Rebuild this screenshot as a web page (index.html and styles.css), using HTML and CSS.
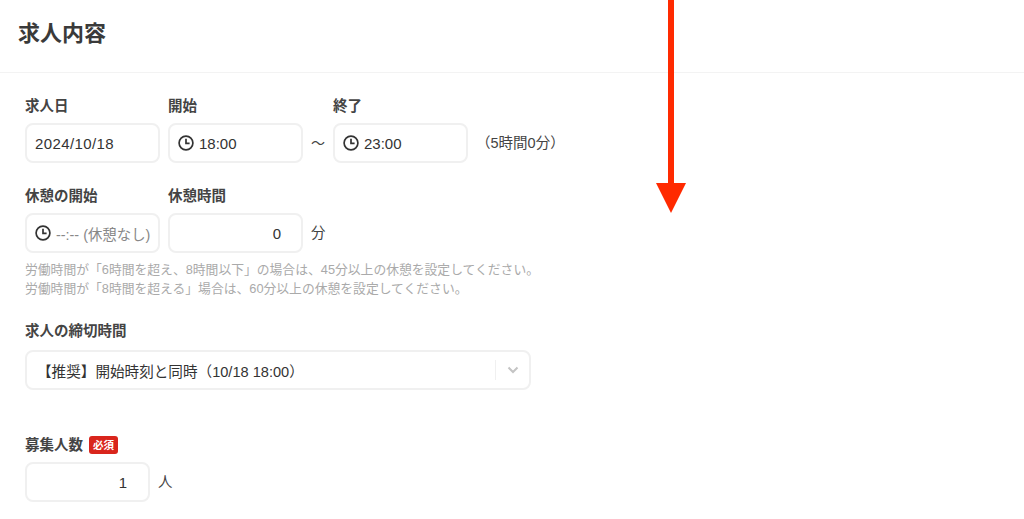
FILE: index.html
```html
<!DOCTYPE html>
<html lang="ja">
<head>
<meta charset="utf-8">
<title>求人内容</title>
<link rel="stylesheet" href="styles.css">
</head>
<body>
<header class="page-header"><h1 class="title">求人内容</h1></header>
<main class="form">
  <section class="row row-date">
    <div class="field w135">
      <label class="label">求人日</label>
      <div class="input date">2024/10/18</div>
    </div>
    <div class="field w135">
      <label class="label">開始</label>
      <div class="input">
        <svg class="clock" viewBox="0 0 16 16"><circle cx="8" cy="8" r="6.9"/><path d="M8 3.8V8.4H11.6"/></svg>
        <span>18:00</span>
      </div>
    </div>
    <span class="tilde">〜</span>
    <div class="field w135">
      <label class="label">終了</label>
      <div class="input">
        <svg class="clock" viewBox="0 0 16 16"><circle cx="8" cy="8" r="6.9"/><path d="M8 3.8V8.4H11.6"/></svg>
        <span>23:00</span>
      </div>
    </div>
    <span class="duration">（5時間0分）</span>
  </section>

  <section class="row row-break">
    <div class="field w135">
      <label class="label">休憩の開始</label>
      <div class="input">
        <svg class="clock" viewBox="0 0 16 16"><circle cx="8" cy="8" r="6.9"/><path d="M8 3.8V8.4H11.6"/></svg>
        <span class="muted">--:-- (休憩なし)</span>
      </div>
    </div>
    <div class="field w135">
      <label class="label">休憩時間</label>
      <div class="input number">0</div>
    </div>
    <span class="unit">分</span>
  </section>
  <p class="help">労働時間が「6時間を超え、8時間以下」の場合は、45分以上の休憩を設定してください。<br>労働時間が「8時間を超える」場合は、60分以上の休憩を設定してください。</p>

  <section class="block-deadline">
    <label class="label">求人の締切時間</label>
    <div class="select">
      <span class="select-value">【推奨】開始時刻と同時（10/18 18:00）</span>
      <span class="select-sep"></span>
      <svg class="chevron" viewBox="0 0 12 8"><path d="M1.5 1.5L6 6L10.5 1.5"/></svg>
    </div>
  </section>

  <section class="block-count">
    <label class="label">募集人数<span class="badge">必須</span></label>
    <div class="row">
      <div class="input number w125">1</div>
      <span class="unit">人</span>
    </div>
  </section>
</main>
<svg class="arrow" viewBox="0 0 30 213"><path d="M12 0H18V183H30L15 213L0 183H12Z"/></svg>
</body>
</html>
```
FILE: styles.css
```css
* { box-sizing: border-box; }
html, body { margin: 0; height: 519px; overflow: hidden; background: #fff; }
body {
  position: relative;
  font-family: "Liberation Sans", "Noto Sans CJK JP", sans-serif;
  color: #333;
  font-size: 14px;
}
.page-header {
  height: 73px;
  border-bottom: 1px solid #f3f3f3;
  padding: 20px 0 0 18px;
}
.title { margin: 0; font-size: 22px; line-height: 27px; font-weight: 700; color: #3a3a3a; }
.form { padding: 23px 0 0 25px; }
.row { display: flex; align-items: flex-end; }
.row-date { gap: 8px; }
.row-break { gap: 8px; margin-top: 23px; }
.field { display: flex; flex-direction: column; gap: 7px; }
.w135 { width: 135px; }
.w125 { width: 125px; }
.label { display: flex; align-items: center; height: 20px; font-size: 14.5px; line-height: 20px; font-weight: 700; color: #444; }
.input {
  height: 40px;
  border: 2px solid #f0f0f0;
  border-radius: 8px;
  background: #fff;
  display: flex;
  align-items: center;
  gap: 5px;
  padding: 0 8px;
  font-size: 15px;
  color: #333;
  white-space: nowrap;
}
.date { letter-spacing: 0.4px; }
.number { justify-content: flex-end; padding-right: 20px; }
.clock { width: 16px; height: 16px; flex: none; fill: none; stroke: #333; stroke-width: 1.7; }
.muted { color: #888; font-size: 14.4px; }
.tilde { height: 40px; line-height: 40px; width: 14px; text-align: center; font-size: 14px; color: #444; }
.duration { height: 40px; line-height: 40px; font-size: 14.5px; color: #444; }
.unit { height: 40px; line-height: 40px; font-size: 14.5px; color: #444; }
.help { margin: 7px 0 0; font-size: 12.8px; line-height: 19px; color: #aaa; white-space: nowrap; }
.block-deadline { margin-top: 23px; }
.select {
  margin-top: 9px;
  width: 506px;
  height: 40px;
  border: 2px solid #f0f0f0;
  border-radius: 8px;
  display: flex;
  align-items: center;
  padding-left: 10px;
}
.select-value { flex: 1; font-size: 14.6px; color: #333; white-space: nowrap; }
.select-sep { width: 1px; height: 20px; background: #f0f0f0; }
.chevron { width: 12px; height: 8px; margin: 0 10px 0 11px; fill: none; stroke: #c4c4c4; stroke-width: 2; }
.block-count { margin-top: 45px; }
.block-count .row { gap: 8px; margin-top: 7px; }
.block-count .number { padding-right: 21px; }
.badge {
  margin-left: 6px;
  width: 29px;
  height: 18px;
  background: #d9251c;
  border-radius: 3px;
  color: #fff;
  font-size: 10.5px;
  line-height: 18px;
  text-align: center;
  font-weight: 700;
}
.arrow { position: absolute; left: 656px; top: 0; width: 30px; height: 213px; fill: #ff2a00; }
```
